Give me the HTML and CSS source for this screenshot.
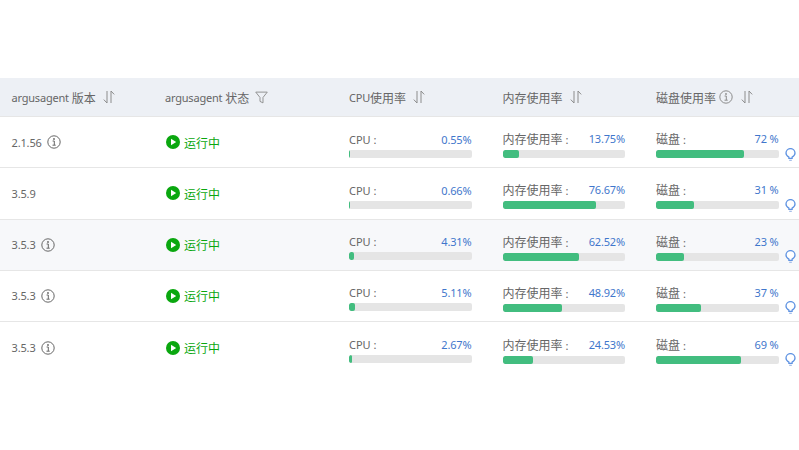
FILE: index.html
```html
<!DOCTYPE html>
<html lang="zh">
<head>
<meta charset="utf-8">
<title>argusagent</title>
<link rel="stylesheet" href="styles.css">
</head>
<body>
<svg class="defs" width="0" height="0" aria-hidden="true">
  <symbol id="sort" viewBox="0 0 14 14"><path d="M5 1v12L1.8 9.6M9 13V1l3.2 3.4" fill="none" stroke="currentColor" stroke-width="1"/></symbol>
  <symbol id="info" viewBox="0 0 14 14"><circle cx="7" cy="7" r="6.2" fill="none" stroke="currentColor" stroke-width="1"/><path d="M5.6 6h1.7v4M5.5 10.2h3.2" fill="none" stroke="currentColor" stroke-width="1"/><circle cx="7" cy="4" r=".9" fill="currentColor"/></symbol>
  <symbol id="filter" viewBox="0 0 14 14"><path d="M.8 1.2h12.4L8.6 7v5.8l-3.2-1.6V7z" fill="none" stroke="currentColor" stroke-width="1"/></symbol>
  <symbol id="run" viewBox="0 0 14 14"><circle cx="7" cy="7" r="7" fill="#0aa70f"/><path d="M5 3.8 10.2 7 5 10.2z" fill="#fff"/></symbol>
  <symbol id="bulb" viewBox="0 0 11 13"><path d="M3.9 9.100C2.300 8.300 1 7.200 1 5.100a4.500 4.500 0 0 1 9 0c0 2.100-1.300 3.200-2.900 4v1.300H3.900z" fill="#fff" stroke="#5f93e2" stroke-width="1.300"/><path d="M4.200 12.300h2.600" stroke="#9db9e8" stroke-width="1.200"/></symbol>
</svg>
<main class="table">
  <div class="row head">
    <div class="cell"><span class="latin">argusagent</span>&nbsp;<span class="zh">版本</span><svg class="ic sort"><use href="#sort"/></svg></div>
    <div class="cell"><span class="latin">argusagent</span>&nbsp;<span class="zh">状态</span><svg class="ic filter"><use href="#filter"/></svg></div>
    <div class="cell"><span class="latin">CPU</span><span class="zh">使用率</span><svg class="ic sort"><use href="#sort"/></svg></div>
    <div class="cell"><span class="zh">内存使用率</span><svg class="ic sort"><use href="#sort"/></svg></div>
    <div class="cell"><span class="zh">磁盘使用率</span><svg class="ic info hinfo"><use href="#info"/></svg><svg class="ic sort tight"><use href="#sort"/></svg></div>
  </div>

  <div class="row">
    <div class="cell"><span class="num">2.1.56</span><svg class="ic info"><use href="#info"/></svg></div>
    <div class="cell status"><svg class="ic run"><use href="#run"/></svg><span class="zh">运行中</span></div>
    <div class="cell"><div class="metric"><div class="line"><span>CPU :</span><span class="val">0.55%</span></div><div class="track"><div class="fill" style="width:0.55%"></div></div></div></div>
    <div class="cell"><div class="metric"><div class="line"><span><span class="zh">内存使用率</span> :</span><span class="val">13.75%</span></div><div class="track"><div class="fill" style="width:13.75%"></div></div></div></div>
    <div class="cell"><div class="metric"><div class="line"><span><span class="zh">磁盘</span> :</span><span class="val">72 %</span></div><div class="track"><div class="fill" style="width:72%"></div></div></div><svg class="bulb"><use href="#bulb"/></svg></div>
  </div>

  <div class="row">
    <div class="cell"><span class="num">3.5.9</span></div>
    <div class="cell status"><svg class="ic run"><use href="#run"/></svg><span class="zh">运行中</span></div>
    <div class="cell"><div class="metric"><div class="line"><span>CPU :</span><span class="val">0.66%</span></div><div class="track"><div class="fill" style="width:0.66%"></div></div></div></div>
    <div class="cell"><div class="metric"><div class="line"><span><span class="zh">内存使用率</span> :</span><span class="val">76.67%</span></div><div class="track"><div class="fill" style="width:76.67%"></div></div></div></div>
    <div class="cell"><div class="metric"><div class="line"><span><span class="zh">磁盘</span> :</span><span class="val">31 %</span></div><div class="track"><div class="fill" style="width:31%"></div></div></div><svg class="bulb"><use href="#bulb"/></svg></div>
  </div>

  <div class="row alt">
    <div class="cell"><span class="num">3.5.3</span><svg class="ic info"><use href="#info"/></svg></div>
    <div class="cell status"><svg class="ic run"><use href="#run"/></svg><span class="zh">运行中</span></div>
    <div class="cell"><div class="metric"><div class="line"><span>CPU :</span><span class="val">4.31%</span></div><div class="track"><div class="fill" style="width:4.31%"></div></div></div></div>
    <div class="cell"><div class="metric"><div class="line"><span><span class="zh">内存使用率</span> :</span><span class="val">62.52%</span></div><div class="track"><div class="fill" style="width:62.52%"></div></div></div></div>
    <div class="cell"><div class="metric"><div class="line"><span><span class="zh">磁盘</span> :</span><span class="val">23 %</span></div><div class="track"><div class="fill" style="width:23%"></div></div></div><svg class="bulb"><use href="#bulb"/></svg></div>
  </div>

  <div class="row">
    <div class="cell"><span class="num">3.5.3</span><svg class="ic info"><use href="#info"/></svg></div>
    <div class="cell status"><svg class="ic run"><use href="#run"/></svg><span class="zh">运行中</span></div>
    <div class="cell"><div class="metric"><div class="line"><span>CPU :</span><span class="val">5.11%</span></div><div class="track"><div class="fill" style="width:5.11%"></div></div></div></div>
    <div class="cell"><div class="metric"><div class="line"><span><span class="zh">内存使用率</span> :</span><span class="val">48.92%</span></div><div class="track"><div class="fill" style="width:48.92%"></div></div></div></div>
    <div class="cell"><div class="metric"><div class="line"><span><span class="zh">磁盘</span> :</span><span class="val">37 %</span></div><div class="track"><div class="fill" style="width:37%"></div></div></div><svg class="bulb"><use href="#bulb"/></svg></div>
  </div>

  <div class="row last">
    <div class="cell"><span class="num">3.5.3</span><svg class="ic info"><use href="#info"/></svg></div>
    <div class="cell status"><svg class="ic run"><use href="#run"/></svg><span class="zh">运行中</span></div>
    <div class="cell"><div class="metric"><div class="line"><span>CPU :</span><span class="val">2.67%</span></div><div class="track"><div class="fill" style="width:2.67%"></div></div></div></div>
    <div class="cell"><div class="metric"><div class="line"><span><span class="zh">内存使用率</span> :</span><span class="val">24.53%</span></div><div class="track"><div class="fill" style="width:24.53%"></div></div></div></div>
    <div class="cell"><div class="metric"><div class="line"><span><span class="zh">磁盘</span> :</span><span class="val">69 %</span></div><div class="track"><div class="fill" style="width:69%"></div></div></div><svg class="bulb"><use href="#bulb"/></svg></div>
  </div>
</main>
</body>
</html>
```
FILE: styles.css
```css
* { box-sizing: border-box; }
html, body { margin: 0; height: 100%; background: #fff; overflow: hidden; }
body {
  padding-top: 78px;
  font-family: "Noto Sans", "Noto Sans CJK SC", sans-serif;
  font-size: 11px;
  color: #666;
}
.defs { position: absolute; }
.table { width: 799px; }
.row {
  display: grid;
  grid-template-columns: 153.5px 184px 153.5px 153.500px 154.500px;
  height: 51.2px;
  border-bottom: 1px solid #e6e6e6;
}
.row.head { height: 39.2px; background: #edf0f5; }
.row.alt { background: #f7f8fa; }
.row.last { border-bottom: 0; }
.cell {
  display: flex;
  align-items: center;
  padding-left: 11.5px;
  min-width: 0;
  white-space: nowrap;
}
.zh { font-family: "Noto Sans CJK SC", sans-serif; font-size: 12px; }
.latin { letter-spacing: -.2px; }
.num { letter-spacing: -.15px; }
.ic { flex: none; width: 14px; height: 14px; }
.sort { margin-left: 6px; color: #8c8c8c; }
.sort.tight { margin-left: 7px; }
.info { margin-left: 5.5px; color: #666; }
.hinfo { margin-left: 3px; color: #8c8c8c; }
.filter { width: 13px; height: 13px; margin-left: 6px; color: #8c8c8c; }
.status { color: #0aa70f; }
.run { margin: 0 4px 0 1px; }
.metric { width: 122.500px; flex: none; padding-top: 5px; }
.line {
  display: flex;
  justify-content: space-between;
  line-height: 16px;
  margin-bottom: 2px;
}
.val { color: #3f77cc; letter-spacing: -.15px; }
.track { height: 8px; background: #e5e5e5; border-radius: 2px; overflow: hidden; }
.fill { height: 100%; background: #42bd7f; border-radius: 2px; }
.bulb { flex: none; width: 11px; height: 13px; margin: 24px 0 0 6px; align-self: center; }
```
